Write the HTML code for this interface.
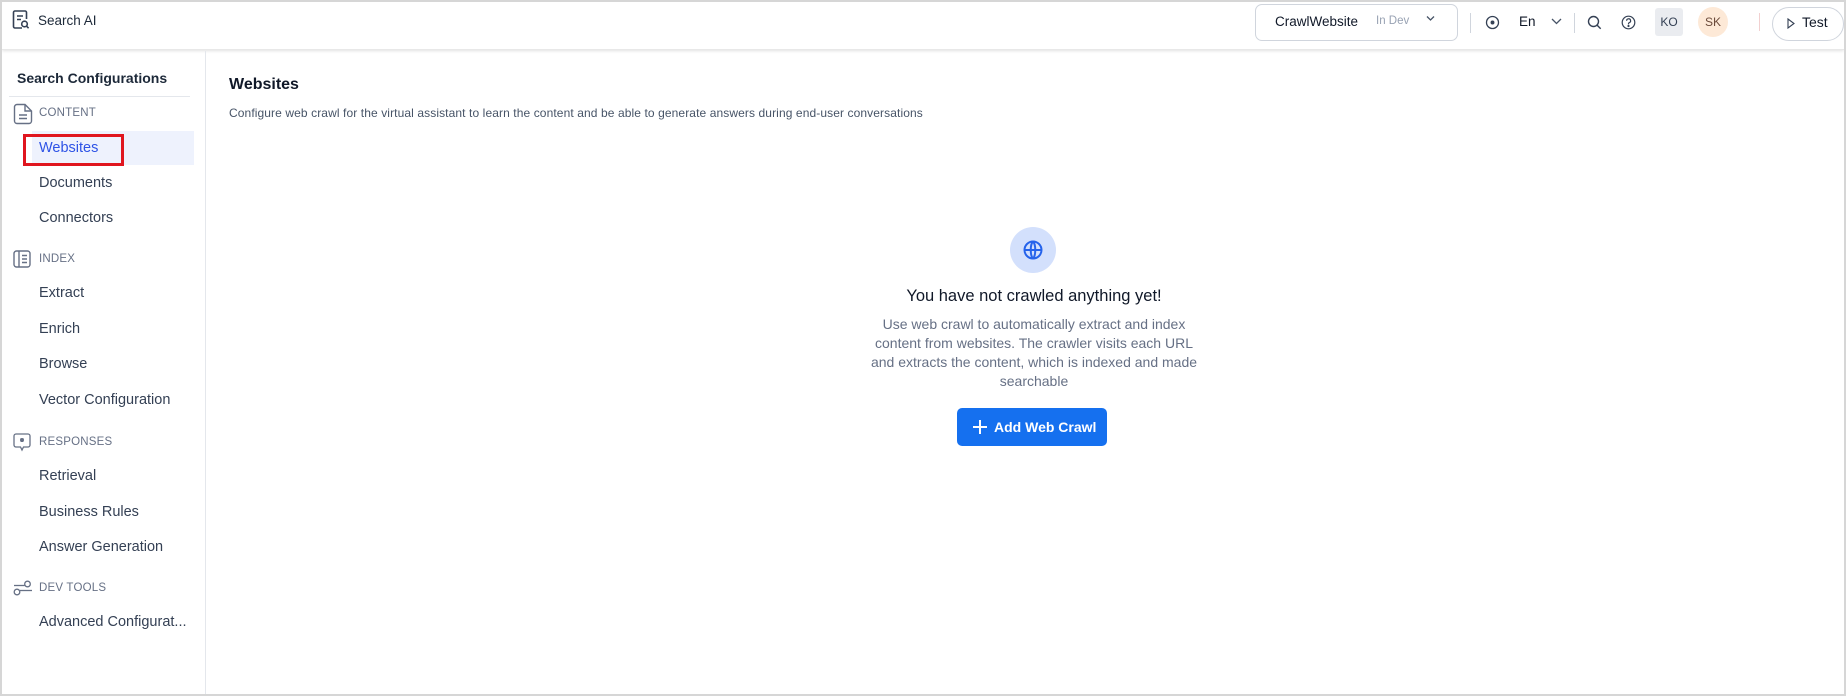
<!DOCTYPE html>
<html><head><meta charset="utf-8"><style>
*{box-sizing:border-box;margin:0;padding:0}
body{width:1846px;height:696px;overflow:hidden;background:#fff;font-family:"Liberation Sans",sans-serif;color:#1d2939;position:relative}
.frame{position:absolute;inset:0;border:2px solid #d6d6d6;border-right-width:2px}
.hdr{position:absolute;left:2px;top:2px;right:2px;height:48px;background:#fff;box-shadow:0 1px 3px rgba(0,0,0,.12);border-bottom:1px solid #e8e8e8}
.abs{position:absolute}
.side{position:absolute;left:2px;top:51px;width:204px;bottom:2px;border-right:1px solid #e4e7ec}
.nav{position:absolute;left:39px;font-size:14.5px;color:#344054}
.sec{position:absolute;left:39px;font-size:11.5px;color:#667085;letter-spacing:.2px}
.icon{position:absolute;left:13px}
</style></head><body>
<div class="hdr"></div>
<svg class="abs" style="left:12px;top:10px" width="18" height="20" viewBox="0 0 18 20" fill="none" stroke="#344054" stroke-width="1.6"><path d="M10 18H3a1.5 1.5 0 0 1-1.5-1.5v-14A1.5 1.5 0 0 1 3 1h10a1.5 1.5 0 0 1 1.5 1.5V9"/><path d="M5 6h6M5 9.5h4"/><circle cx="12.5" cy="14" r="2.8"/><path d="M14.6 16.2l2 2"/></svg>
<div class="abs" style="left:38px;top:13px;font-size:13.5px;color:#1d2939">Search AI</div>
<div class="abs" style="left:1255px;top:4px;width:203px;height:37px;border:1px solid #d0d5dd;border-radius:7px"></div>
<div class="abs" style="left:1275px;top:14px;font-size:13.5px;color:#101828">CrawlWebsite</div>
<div class="abs" style="left:1376px;top:15px;font-size:11.5px;color:#98a2b3">In Dev</div>
<svg class="abs" style="left:1426px;top:15px" width="9" height="7" viewBox="0 0 9 7" fill="none" stroke="#475467" stroke-width="1.3"><path d="M1 1.5l3.5 3.5 3.5-3.5"/></svg>
<div class="abs" style="left:1470px;top:13px;width:1px;height:20px;background:#d0d5dd"></div>
<svg class="abs" style="left:1485px;top:15px" width="15" height="15" viewBox="0 0 15 15" fill="none" stroke="#344054" stroke-width="1.3"><circle cx="7.5" cy="7.5" r="6"/><circle cx="7.5" cy="7.5" r="1.3" fill="#344054"/></svg>
<div class="abs" style="left:1519px;top:14px;font-size:13.5px;color:#101828">En</div>
<svg class="abs" style="left:1551px;top:18px" width="11" height="7" viewBox="0 0 11 7" fill="none" stroke="#475467" stroke-width="1.3"><path d="M1 1l4.5 4.5L10 1"/></svg>
<div class="abs" style="left:1574px;top:13px;width:1px;height:20px;background:#d0d5dd"></div>
<svg class="abs" style="left:1587px;top:15px" width="15" height="15" viewBox="0 0 15 15" fill="none" stroke="#344054" stroke-width="1.4"><circle cx="6.5" cy="6.5" r="5"/><path d="M10.2 10.2l3.5 3.5"/></svg>
<svg class="abs" style="left:1621px;top:15px" width="15" height="15" viewBox="0 0 15 15" fill="none" stroke="#344054" stroke-width="1.2"><circle cx="7.5" cy="7.5" r="6.3"/><path d="M5.6 5.8a2 2 0 1 1 2.6 1.9c-.5.2-.7.6-.7 1.1v.6"/><circle cx="7.5" cy="11" r=".5" fill="#344054"/></svg>
<div class="abs" style="left:1655px;top:8px;width:28px;height:28px;background:#eaecf0;border-radius:3px;font-size:12px;color:#344054;text-align:center;line-height:28px">KO</div>
<div class="abs" style="left:1698px;top:7px;width:30px;height:30px;background:#fde9d7;border-radius:50%;font-size:12px;color:#6b4a3a;text-align:center;line-height:30px">SK</div>
<div class="abs" style="left:1759px;top:13px;width:1px;height:18px;background:#f2d0d0"></div>
<div class="abs" style="left:1772px;top:7px;width:72px;height:34px;border:1px solid #d0d5dd;border-radius:17px"></div>
<svg class="abs" style="left:1787px;top:18px" width="8" height="11" viewBox="0 0 8 11" fill="none" stroke="#344054" stroke-width="1.1"><path d="M1 1l6 4.5L1 10z"/></svg>
<div class="abs" style="left:1802px;top:14px;font-size:14px;color:#101828">Test</div>

<div class="side"></div>
<div class="abs" style="left:17px;top:70px;font-size:14px;font-weight:bold;color:#1d2939">Search Configurations</div>
<div class="abs" style="left:9px;top:96px;width:181px;height:1px;background:#e4e7ec"></div>
<svg class="icon" style="top:103px" width="20" height="22" viewBox="0 0 20 22" fill="none" stroke="#667085" stroke-width="1.4"><path d="M12 1.5H4A2.5 2.5 0 0 0 1.5 4v14A2.5 2.5 0 0 0 4 20.5h12a2.5 2.5 0 0 0 2.5-2.5V8z"/><path d="M12 1.5V8h6.5M6 12h8M6 15.5h8"/></svg>
<div class="sec" style="top:107px">CONTENT</div>
<div class="abs" style="left:32px;top:131px;width:162px;height:34px;background:#eef2fd"></div>
<div class="abs" style="left:23px;top:134px;width:101px;height:32px;border:3px solid #e0161f"></div>
<div class="nav" style="top:140px;color:#2e53e6">Websites</div>
<div class="nav" style="top:175px">Documents</div>
<div class="nav" style="top:210px">Connectors</div>
<svg class="icon" style="top:250px" width="18" height="18" viewBox="0 0 18 18" fill="none" stroke="#667085" stroke-width="1.4"><rect x="1" y="1" width="16" height="16" rx="2.5"/><path d="M6 1v16M9 5.5h5M9 9h5M9 12.5h5"/></svg>
<div class="sec" style="top:253px">INDEX</div>
<div class="nav" style="top:285px">Extract</div>
<div class="nav" style="top:321px">Enrich</div>
<div class="nav" style="top:356px">Browse</div>
<div class="nav" style="top:392px">Vector Configuration</div>
<svg class="icon" style="top:433px" width="18" height="19" viewBox="0 0 18 19" fill="none" stroke="#667085" stroke-width="1.3"><path d="M3 1h12a2 2 0 0 1 2 2v9a2 2 0 0 1-2 2h-4.5L9 17l-1.5-3H3a2 2 0 0 1-2-2V3a2 2 0 0 1 2-2z"/><path d="M9 5v4M7 7h4M7.5 5.5l3 3M10.5 5.5l-3 3"/></svg>
<div class="sec" style="top:436px">RESPONSES</div>
<div class="nav" style="top:468px">Retrieval</div>
<div class="nav" style="top:504px">Business Rules</div>
<div class="nav" style="top:539px">Answer Generation</div>
<svg class="icon" style="top:580px" width="20" height="16" viewBox="0 0 20 16" fill="none" stroke="#667085" stroke-width="1.3"><circle cx="14.5" cy="4" r="2.8"/><path d="M1 5.5h10.5"/><circle cx="4" cy="12" r="2.8"/><path d="M7 10.5h12"/></svg>
<div class="sec" style="top:582px">DEV TOOLS</div>
<div class="nav" style="top:614px">Advanced Configurat...</div>

<div class="abs" style="left:229px;top:76px;font-size:16px;font-weight:bold;color:#101828">Websites</div>
<div class="abs" style="left:229px;top:106px;font-size:12px;color:#475467;letter-spacing:.1px">Configure web crawl for the virtual assistant to learn the content and be able to generate answers during end-user conversations</div>
<div class="abs" style="left:1010px;top:227px;width:46px;height:46px;border-radius:50%;background:#d3e0fc"></div>
<svg class="abs" style="left:1022px;top:239px" width="22" height="22" viewBox="0 0 22 22" fill="none" stroke="#2563eb" stroke-width="2"><circle cx="11" cy="11" r="8.5"/><path d="M2.5 11h17M11 2.5c-3 3-3 14 0 17M11 2.5c3 3 3 14 0 17"/></svg>
<div class="abs" style="left:834px;top:287px;width:400px;text-align:center;font-size:16.5px;color:#101828">You have not crawled anything yet!</div>
<div class="abs" style="left:859px;top:315px;width:350px;text-align:center;font-size:14px;line-height:19px;color:#667085">Use web crawl to automatically extract and index<br>content from websites. The crawler visits each URL<br>and extracts the content, which is indexed and made<br>searchable</div>
<div class="abs" style="left:957px;top:408px;width:150px;height:38px;background:#1570ef;border-radius:5px;color:#fff;font-size:14px;font-weight:bold;line-height:38px;padding-left:37px">Add Web Crawl</div>
<svg class="abs" style="left:973px;top:420px" width="14" height="14" viewBox="0 0 14 14" stroke="#fff" stroke-width="2"><path d="M7 0v14M0 7h14"/></svg>
<div class="frame"></div>
</body></html>
